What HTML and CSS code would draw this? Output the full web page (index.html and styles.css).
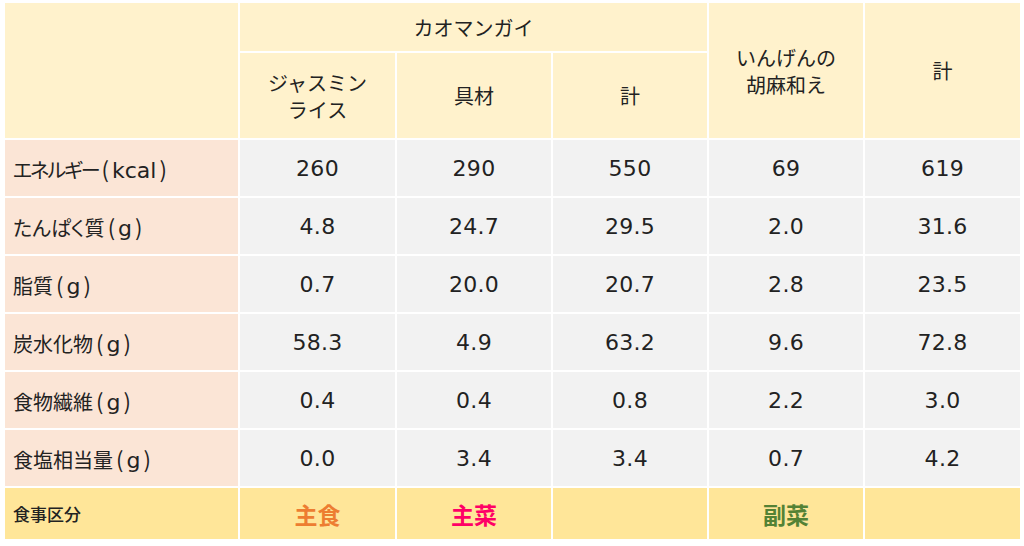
FILE: index.html
```html
<!DOCTYPE html>
<html lang="ja">
<head>
<meta charset="utf-8">
<link rel="stylesheet" href="styles.css">
</head>
<body>
<table class="nutri">
  <colgroup>
    <col class="c-label"><col class="c-a"><col class="c-b"><col class="c-b"><col class="c-b"><col class="c-a">
  </colgroup>
  <thead>
    <tr class="h1">
      <th rowspan="2" class="blank"></th>
      <th colspan="3">カオマンガイ</th>
      <th rowspan="2">いんげんの<br>胡麻和え</th>
      <th rowspan="2">計</th>
    </tr>
    <tr class="h2">
      <th>ジャスミン<br>ライス</th>
      <th>具材</th>
      <th>計</th>
    </tr>
  </thead>
  <tbody>
    <tr><th class="lbl"><span class="kana tight">エネルギー</span><span class="unit">(<span class="u">kcal</span>)</span></th><td>260</td><td>290</td><td>550</td><td>69</td><td>619</td></tr>
    <tr><th class="lbl"><span class="kana">たんぱく質</span><span class="unit">(<span class="u">g</span>)</span></th><td>4.8</td><td>24.7</td><td>29.5</td><td>2.0</td><td>31.6</td></tr>
    <tr><th class="lbl"><span class="kana">脂質</span><span class="unit">(<span class="u">g</span>)</span></th><td>0.7</td><td>20.0</td><td>20.7</td><td>2.8</td><td>23.5</td></tr>
    <tr><th class="lbl"><span class="kana">炭水化物</span><span class="unit">(<span class="u">g</span>)</span></th><td>58.3</td><td>4.9</td><td>63.2</td><td>9.6</td><td>72.8</td></tr>
    <tr><th class="lbl"><span class="kana">食物繊維</span><span class="unit">(<span class="u">g</span>)</span></th><td>0.4</td><td>0.4</td><td>0.8</td><td>2.2</td><td>3.0</td></tr>
    <tr><th class="lbl"><span class="kana">食塩相当量</span><span class="unit">(<span class="u">g</span>)</span></th><td>0.0</td><td>3.4</td><td>3.4</td><td>0.7</td><td>4.2</td></tr>
    <tr class="cat">
      <th class="lbl">食事区分</th>
      <td class="shushoku">主食</td>
      <td class="shusai">主菜</td>
      <td></td>
      <td class="fukusai">副菜</td>
      <td></td>
    </tr>
  </tbody>
</table>
</body>
</html>
```

FILE: styles.css
```css
html, body {
  margin: 0;
  padding: 0;
  background: #ffffff;
}

body {
  padding: 1px 0 0 3px;
  font-family: "Noto Sans CJK JP", sans-serif;
  color: #222222;
}

.nutri {
  border-collapse: separate;
  border-spacing: 2px;
  table-layout: fixed;
  width: 1019px;
}

.c-label { width: 233px; }
.c-a { width: 155px; }
.c-b { width: 154px; }

.nutri th,
.nutri td {
  padding: 0;
  text-align: center;
  vertical-align: middle;
  font-weight: normal;
}

thead th {
  background: #fff2cc;
  font-size: 20px;
  line-height: 27px;
}

.h1 th { height: 48px; }
.h2 th { height: 85px; }

tbody td {
  background: #f2f2f2;
  height: 56px;
  font-family: "DejaVu Sans", "Noto Sans CJK JP", sans-serif;
  font-size: 22px;
  letter-spacing: 0.3px;
}

tbody th.lbl {
  background: #fbe5d6;
  text-align: left;
  padding-left: 8px;
  font-size: 20px;
  white-space: nowrap;
}

.kana {
  font-feature-settings: "palt";
}

.kana.tight {
  letter-spacing: -2px;
}

.unit {
  font-family: "Noto Sans CJK JP", sans-serif;
  font-size: 22px;
  margin-left: 3px;
}

.u {
  font-family: "DejaVu Sans", sans-serif;
  font-size: 22px;
  margin: 0 3px;
}

.cat th.lbl,
.cat td {
  background: #ffe699;
  height: 51px;
}

.cat th.lbl {
  font-size: 17px;
  font-weight: 500;
}

.cat td {
  font-family: "Noto Sans CJK JP", sans-serif;
  font-size: 23px;
  font-weight: bold;
  letter-spacing: 0;
}

.shushoku { color: #ed7d31; }
.shusai { color: #ff0066; }
.fukusai { color: #548235; }
```
